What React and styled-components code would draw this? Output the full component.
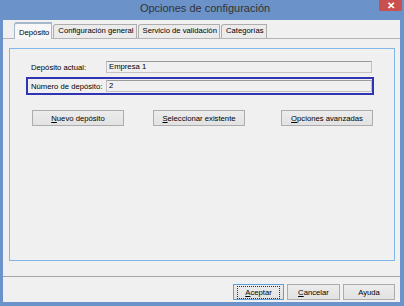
import React from 'react';
import styled, {createGlobalStyle, css} from 'styled-components';

const GlobalStyle = createGlobalStyle`
    html, body {
        margin: 0;
        padding: 0;
        background: #ffffff;
    }
    body {
        font-family: 'Liberation Sans', Arial, sans-serif;
        font-size: 7.7px;
        color: #000000;
    }
`

const Window = styled.div`
    width: 404px;
    height: 306px;
    box-sizing: border-box;
    display: flex;
    flex-direction: column;
    background: #6b92c9;
    padding: 0 4px 4px 3px;
    overflow: hidden;
`

const TitleBar = styled.div`
    height: 20px;
    display: grid;
    grid-template-columns: 1fr auto 1fr;
    align-items: start;
    margin-right: -4px;
`

const Title = styled.div`
    grid-column: 2;
    font-size: 11px;
    line-height: 17px;
    color: #333333;
    padding-left: 3px;
`

const Close = styled.div`
    grid-column: 3;
    justify-self: end;
    width: 23px;
    height: 11px;
    margin-right: 2px;
    background: #c9504e;
    color: #ffffff;
    font-size: 10px;
    font-weight: bold;
    line-height: 11px;
    text-align: center;
`

const Client = styled.div`
    flex: 1;
    display: flex;
    flex-direction: column;
    background: #f0f0f0;
`

const TabStrip = styled.div`
    height: 18px;
    display: flex;
    align-items: flex-end;
    padding-left: 11px;
    border-bottom: 1px solid #b4b4b4;
`

const Tab = styled.div`
    position: relative;
    height: 13px;
    line-height: 12px;
    padding: 0 2px 0 4px;
    margin-right: 1px;
    border: 1px solid #adadad;
    border-bottom: none;
    border-top-left-radius: 3px;
    background: #ebebeb;
    white-space: nowrap;

    ${p => p.$active && css`
        height: 15px;
        line-height: 17px;
        background: #f7f7f7;
        border-top: 2px solid #4a9be8;
        border-color: #a8b8cc;
        margin-bottom: -1px;
        z-index: 1;
    `}
`

const Panel = styled.div`
    flex: 1;
    display: flex;
    padding: 9px 5px 15px 6px;
`

const Group = styled.div`
    flex: 1;
    border: 1px solid #82b7ea;
    padding: 9px 20px 0 16px;
    display: flex;
    flex-direction: column;
    gap: 1px;
`

const Row = styled.div`
    display: grid;
    grid-template-columns: 75px 1fr;
    align-items: center;
    padding: 1px 0 1px 3px;
    border: 2px solid ${p => p.$focused ? '#2f34b2' : 'transparent'};
`

const Label = styled.div`
    white-space: nowrap;
`

const Field = styled.div`
    height: 12px;
    box-sizing: border-box;
    border: 1px solid #c2c2c2;
    border-top-color: #9a9a9a;
    background: #f0f0f0;
    padding-left: 2px;
    line-height: 10px;
`

const ButtonRow = styled.div`
    display: flex;
    margin-top: 14px;
    padding-left: 6px;
    padding-right: 1px;
`

const Button = styled.div`
    width: ${p => p.$w}px;
    height: 16px;
    box-sizing: border-box;
    display: flex;
    align-items: center;
    justify-content: center;
    border: 1px solid ${p => p.$default ? '#5e9fdc' : '#acacac'};
    background: linear-gradient(#ececec, #e2e2e2);
    white-space: nowrap;
    margin-left: ${p => p.$ml || 0}px;

    u {
        text-decoration: underline;
    }
`

const FocusRing = styled.span`
    border: 1px dotted #333333;
    padding: 1px 7px;
    line-height: 9px;
`

const Footer = styled.div`
    height: 26px;
    box-sizing: border-box;
    border-top: 1px solid #a5a5a5;
    display: flex;
    justify-content: flex-end;
    align-items: flex-start;
    gap: 3px;
    padding: 7px 5px 0 0;
`

const tabs = ['Depósito', 'Configuración general', 'Servicio de validación', 'Categorías'];

export default function App() {
    return (
        <>
            <GlobalStyle/>
            <Window>
                <TitleBar>
                    <Title>Opciones de configuración</Title>
                    <Close>✕</Close>
                </TitleBar>
                <Client>
                    <TabStrip>
                        {tabs.map((t, i) => (
                            <Tab key={t} $active={i === 0}>{t}</Tab>
                        ))}
                    </TabStrip>
                    <Panel>
                        <Group>
                            <Row>
                                <Label>Depósito actual:</Label>
                                <Field>Empresa 1</Field>
                            </Row>
                            <Row $focused>
                                <Label>Número de depósito:</Label>
                                <Field>2</Field>
                            </Row>
                            <ButtonRow>
                                <Button $w={92}><span><u>N</u>uevo depósito</span></Button>
                                <Button $w={92} $ml={29}><span><u>S</u>eleccionar existente</span></Button>
                                <Button $w={92} $ml={36}><span><u>O</u>pciones avanzadas</span></Button>
                            </ButtonRow>
                        </Group>
                    </Panel>
                    <Footer>
                        <Button $w={51} $default><FocusRing><u>A</u>ceptar</FocusRing></Button>
                        <Button $w={53}><span><u>C</u>ancelar</span></Button>
                        <Button $w={52}><span>Ayuda</span></Button>
                    </Footer>
                </Client>
            </Window>
        </>
    );
}
